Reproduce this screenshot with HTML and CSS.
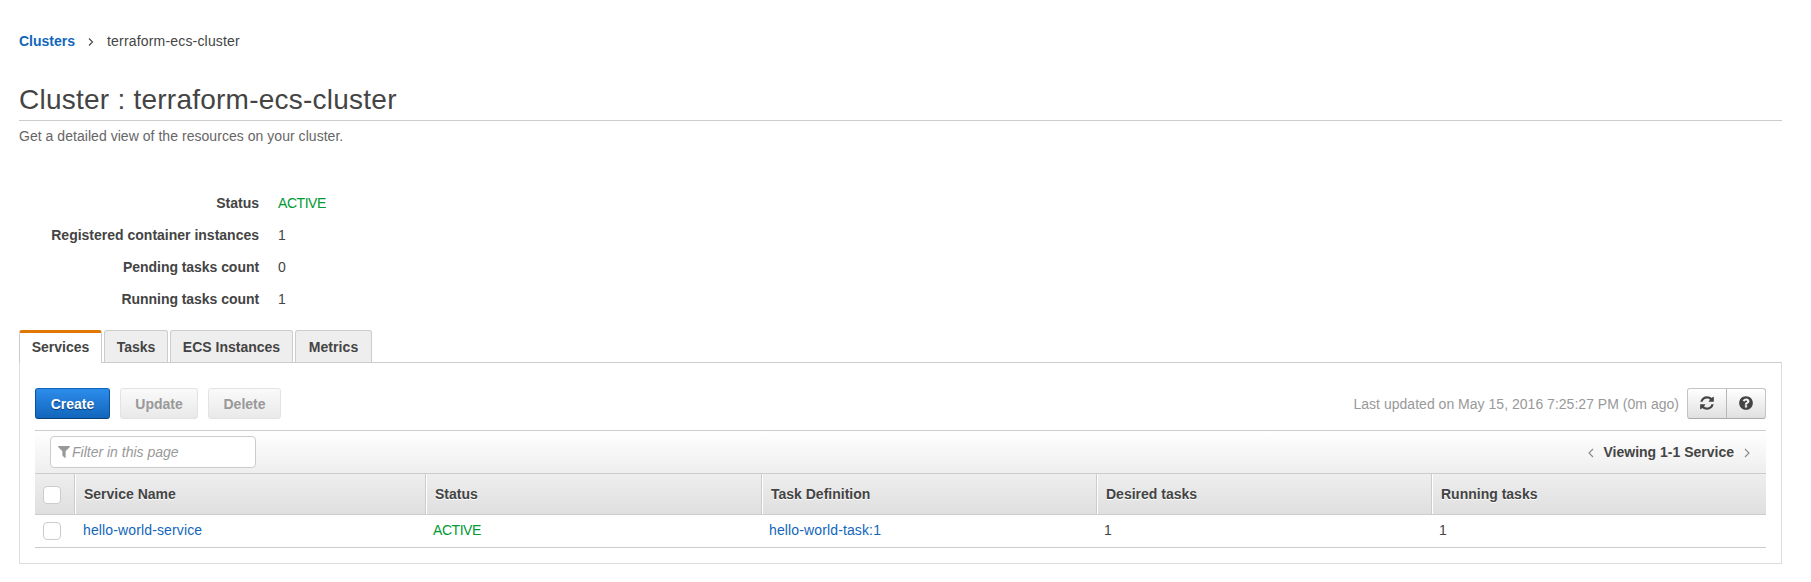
FILE: index.html
```html
<!DOCTYPE html>
<html lang="en">
<head>
<meta charset="utf-8">
<title>Cluster : terraform-ecs-cluster</title>
<link rel="stylesheet" href="styles.css">
</head>
<body>
<nav class="crumbs">
  <a class="crumb-link" href="#">Clusters</a>
  <svg class="crumb-sep" viewBox="0 0 6 8"><path d="M1 .5 4.500 4 1 7.500"/></svg>
  <span class="crumb-current">terraform-ecs-cluster</span>
</nav>
<h1 class="title">Cluster : terraform-ecs-cluster</h1>
<p class="subtitle">Get a detailed view of the resources on your cluster.</p>
<dl class="facts">
  <dt>Status</dt><dd class="active">ACTIVE</dd>
  <dt>Registered container instances</dt><dd>1</dd>
  <dt class="tight">Pending tasks count</dt><dd>0</dd>
  <dt class="tight">Running tasks count</dt><dd>1</dd>
</dl>
<div class="tabs">
  <div class="tab selected">Services</div>
  <div class="tab tab-tasks">Tasks</div>
  <div class="tab tab-instances">ECS Instances</div>
  <div class="tab tab-metrics">Metrics</div>
</div>
<section class="panel">
  <div class="toolbar">
    <button class="btn primary">Create</button>
    <button class="btn update" disabled>Update</button>
    <button class="btn delete" disabled>Delete</button>
    <span class="updated">Last updated on May 15, 2016 7:25:27 PM (0m ago)</span>
    <div class="icon-group">
      <button class="icon-btn" aria-label="Refresh"><svg viewBox="0 0 1792 1792"><path d="M1639 1056q0 5-1 7-64 268-268 434.500t-478 166.500q-146 0-282.500-55t-243.500-157l-129 129q-19 19-45 19t-45-19-19-45v-448q0-26 19-45t45-19h448q26 0 45 19t19 45-19 45l-137 137q71 66 161 102t187 36q134 0 250-65t186-179q11-17 53-117 8-23 30-23h192q13 0 22.500 9.500t9.500 22.500zm25-800v448q0 26-19 45t-45 19h-448q-26 0-45-19t-19-45 19-45l138-138q-148-137-349-137-134 0-250 65t-186 179q-11 17-53 117-8 23-30 23h-199q-13 0-22.500-9.500t-9.500-22.500v-7q65-268 270-434.500t480-166.500q146 0 284 55.500t245 156.500l130-129q19-19 45-19t45 19 19 45z"/></svg></button>
      <button class="icon-btn" aria-label="Help"><svg viewBox="0 0 1792 1792"><path d="M1024 1376v-192q0-14-9-23t-23-9h-192q-14 0-23 9t-9 23v192q0 14 9 23t23 9h192q14 0 23-9t9-23zm256-672q0-88-55.500-163t-138.500-116-170-41q-243 0-371 213-15 24 8 42l132 100q7 6 19 6 16 0 25-12 53-68 86-92 34-24 86-24 48 0 85.500 26t37.500 59q0 38-20 61t-68 45q-63 28-115.500 86.500t-52.500 125.500v36q0 14 9 23t23 9h192q14 0 23-9t9-23q0-19 21.500-49.500t54.500-49.500q32-18 49-28.500t46-35 44.500-48 28-60.500 12.500-81zm384 192q0 209-103 385.500t-279.500 279.500-385.500 103-385.500-103-279.500-279.500-103-385.500 103-385.500 279.500-279.500 385.500-103 385.500 103 279.500 279.500 103 385.500z"/></svg></button>
    </div>
  </div>
  <div class="filter-bar">
    <div class="filter">
      <svg viewBox="190 256 1412 1408"><path d="M1595 295q17 41-14 70l-493 493v742q0 42-39 59-13 5-25 5-27 0-45-19l-256-256q-19-19-19-45V858L211 365q-31-29-14-70 17-39 59-39h1280q42 0 59 39z"/></svg>
      <span>Filter in this page</span>
    </div>
    <div class="pager">
      <svg viewBox="0 0 6 10"><path d="M5 1 1 5l4 4"/></svg>
      <span>Viewing 1-1 Service</span>
      <svg viewBox="0 0 6 10"><path d="m1 1 4 4-4 4"/></svg>
    </div>
  </div>
  <div class="row head">
    <div class="check"><i class="box"></i></div>
    <div class="cell">Service Name</div>
    <div class="cell">Status</div>
    <div class="cell">Task Definition</div>
    <div class="cell">Desired tasks</div>
    <div class="cell">Running tasks</div>
  </div>
  <div class="row body">
    <div class="check"><i class="box"></i></div>
    <div class="cell"><a href="#">hello-world-service</a></div>
    <div class="cell active">ACTIVE</div>
    <div class="cell"><a href="#">hello-world-task:1</a></div>
    <div class="cell">1</div>
    <div class="cell">1</div>
  </div>
</section>
</body>
</html>
```
FILE: styles.css
```css
* { box-sizing: border-box; }
body {
  margin: 0;
  padding: 31px 29px 0 19px;
  background: #fff;
  color: #444;
  font: 14px/20px "Helvetica Neue", "Liberation Sans", Arial, sans-serif;
  white-space: nowrap;
  overflow: hidden;
}
a { color: #1166bb; text-decoration: none; }
.active { color: #093; letter-spacing: -.45px; }

.crumbs { display: flex; align-items: center; height: 20px; }
.crumb-link { width: 56px; font-weight: bold; }
.crumb-sep { width: 6px; height: 8px; margin: 1px 13px 0; fill: none; stroke: #444; stroke-width: 1.1; }
.crumb-current { letter-spacing: .18px; }
.title {
  margin: 29px 0 0;
  height: 41px;
  border-bottom: 1px solid #ccc;
  font-size: 28px;
  font-weight: normal;
  letter-spacing: .24px;
  line-height: 40px;
}
.subtitle { margin: 5px 0 0; color: #666; letter-spacing: .04px; }

.facts {
  display: grid;
  grid-template-columns: 240px auto;
  grid-auto-rows: 32px;
  column-gap: 19px;
  margin: 41px 0 0;
  line-height: 32px;
}
.facts dt { text-align: right; font-weight: bold; }
.facts .tight { letter-spacing: -.05px; }
.facts dd { margin: 0; }

.tabs { display: flex; gap: 2px; height: 33px; margin-top: 15px; position: relative; }
.tab {
  height: 32px;
  border: 1px solid #ccc;
  border-bottom: 0;
  border-radius: 3px 3px 0 0;
  background: #eee;
  font-weight: bold;
  line-height: 33px;
  text-align: center;
}
.selected { width: 83px; height: 33px; border-top: 3px solid #e07700; background: #fff; line-height: 29px; }
.tab-tasks { width: 64px; }
.tab-instances { width: 123px; }
.tab-metrics { width: 77px; letter-spacing: .1px; }

.panel { height: 202px; margin-top: -1px; padding: 25px 15px 0; border: 1px solid #ddd; border-top-color: #ccc; }
.toolbar { display: flex; align-items: center; height: 31px; }
.btn {
  height: 31px;
  padding: 2px 0 0;
  border: 1px solid #e3e3e3;
  border-radius: 3px;
  background: linear-gradient(#fafafa, #e9e9e9);
  color: #999;
  font: bold 14px/27px "Helvetica Neue", "Liberation Sans", Arial, sans-serif;
  text-align: center;
}
.primary {
  width: 75px;
  border-color: #1166bb #0d5299 #0b3f78;
  background: linear-gradient(#2d8ceb, #1166bb);
  color: #fff;
  text-shadow: 0 1px 1px #063e78;
}
.update { width: 78px; margin-left: 10px; }
.delete { width: 73px; margin-left: 10px; }
.updated { margin-left: auto; color: #999; letter-spacing: .02px; }
.icon-group {
  display: flex;
  width: 79px;
  height: 31px;
  margin-left: 8px;
  border: 1px solid #c4c4c4;
  border-bottom-color: #aaa;
  border-radius: 3px;
  background: linear-gradient(#fff, #e0e0e0);
}
.icon-btn { display: flex; flex: 1; align-items: center; justify-content: center; padding: 0 0 1px; border: 0; background: none; }
.icon-btn + .icon-btn { border-left: 1px solid #b8b8b8; }
.icon-btn svg { width: 16px; height: 16px; fill: #444; }

.filter-bar {
  display: flex;
  align-items: flex-start;
  justify-content: space-between;
  height: 44px;
  margin-top: 11px;
  padding: 5px 16px 0 15px;
  border-top: 1px solid #ccc;
  border-bottom: 1px solid #ccc;
  background: linear-gradient(#fff, #eee);
}
.filter {
  display: flex;
  align-items: center;
  width: 206px;
  height: 32px;
  padding-left: 7px;
  border: 1px solid #ccc;
  border-radius: 4px;
  background: #fff;
  color: #999;
  font-style: italic;
}
.filter svg { width: 12px; height: 12px; margin-right: 2px; margin-bottom: 1px; fill: #999; }
.pager { display: flex; align-items: center; height: 32px; font-weight: bold; }
.pager svg { width: 6px; height: 10px; margin-top: 2px; fill: none; stroke: #888; stroke-width: 1.1; }
.pager span { margin: 0 10px; }

.row { display: grid; grid-template-columns: 40px 351px 336px 335px 335px 1fr; border-bottom: 1px solid #ccc; }
.head {
  height: 41px;
  background: linear-gradient(#eee, #dfdfdf);
  font-weight: bold;
  line-height: 40px;
  text-shadow: 0 1px 0 #fff;
}
.head .cell { padding-left: 8px; border-left: 1px solid #fff; }
.head > :not(:last-child) { border-right: 1px solid #ccc; }
.body { height: 33px; line-height: 31px; }
.body .cell { padding-left: 7px; }
.body .cell:nth-child(2) { padding-left: 8px; }
.body a { letter-spacing: .13px; }
.check { display: flex; align-items: center; padding: 2px 0 0 8px; }
.body .check { padding-top: 0; }
.box { width: 18px; height: 18px; border: 1px solid #ccc; border-radius: 4px; background: #fff; }
```
